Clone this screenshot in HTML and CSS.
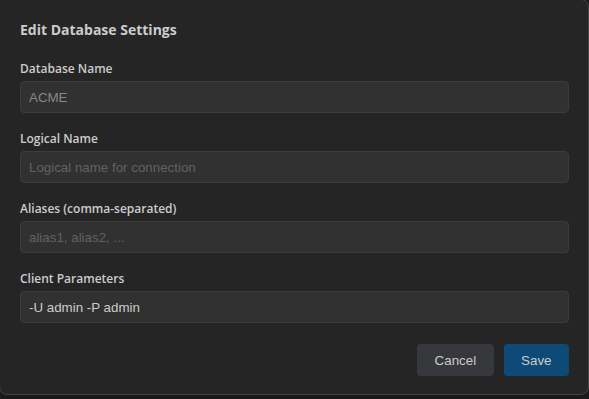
FILE: index.html
```html
<!DOCTYPE html>
<html>
<head>
<meta charset="utf-8">
<link rel="stylesheet" href="styles.css">
</head>
<body>
<div class="dialog">
  <h2 class="title">Edit Database Settings</h2>
  <div class="field">
    <label class="label">Database Name</label>
    <input class="input disabled" type="text" value="ACME" disabled>
  </div>
  <div class="field">
    <label class="label">Logical Name</label>
    <input class="input" type="text" placeholder="Logical name for connection">
  </div>
  <div class="field">
    <label class="label">Aliases (comma-separated)</label>
    <input class="input" type="text" placeholder="alias1, alias2, ...">
  </div>
  <div class="field">
    <label class="label">Client Parameters</label>
    <input class="input" type="text" value="-U admin -P admin">
  </div>
  <div class="actions">
    <button class="btn btn-secondary">Cancel</button>
    <button class="btn btn-primary">Save</button>
  </div>
</div>
</body>
</html>
```
FILE: styles.css
```css
html, body {
  margin: 0;
  padding: 0;
  background: #1a1a1a;
  overflow: hidden;
}
.dialog {
  box-sizing: border-box;
  width: 590px;
  height: 396px;
  margin: -1px 0 0 -1px;
  background: #252526;
  border: 1px solid #454545;
  border-radius: 0 8px 8px 8px;
  padding: 20px 19px 0 20px;
  display: flex;
  flex-direction: column;
}
.title {
  margin: 0 0 21px;
  font-family: "Open Sans", "Noto Sans", sans-serif;
  font-size: 14px;
  font-weight: 700;
  line-height: 20px;
  color: #cccccc;
}
.field {
  display: flex;
  flex-direction: column;
  margin-bottom: 18px;
}
.label {
  font-family: "Open Sans", "Noto Sans", sans-serif;
  font-size: 12px;
  font-weight: 600;
  line-height: 16px;
  color: #cccccc;
  margin-bottom: 4px;
}
.input {
  box-sizing: border-box;
  height: 32px;
  width: 100%;
  margin: 0;
  padding: 0 8px;
  background: #313131;
  border: 1px solid #3c3c3c;
  border-radius: 4px;
  font-family: "Liberation Sans", Arial, sans-serif;
  font-size: 13.33px;
  color: #cccccc;
  outline: none;
}
.input::placeholder {
  color: #626262;
}
.input.disabled {
  color: #878787;
  opacity: 1;
}
.actions {
  display: flex;
  justify-content: flex-end;
  gap: 10px;
  margin-top: 3px;
}
.btn {
  height: 32px;
  padding: 0 17.5px;
  border: none;
  border-radius: 4px;
  font-family: "Liberation Sans", Arial, sans-serif;
  font-size: 13.33px;
  color: #cccccc;
  cursor: pointer;
}
.btn-secondary {
  background: #37383b;
}
.btn-primary {
  background: #0e4a78;
}
```
